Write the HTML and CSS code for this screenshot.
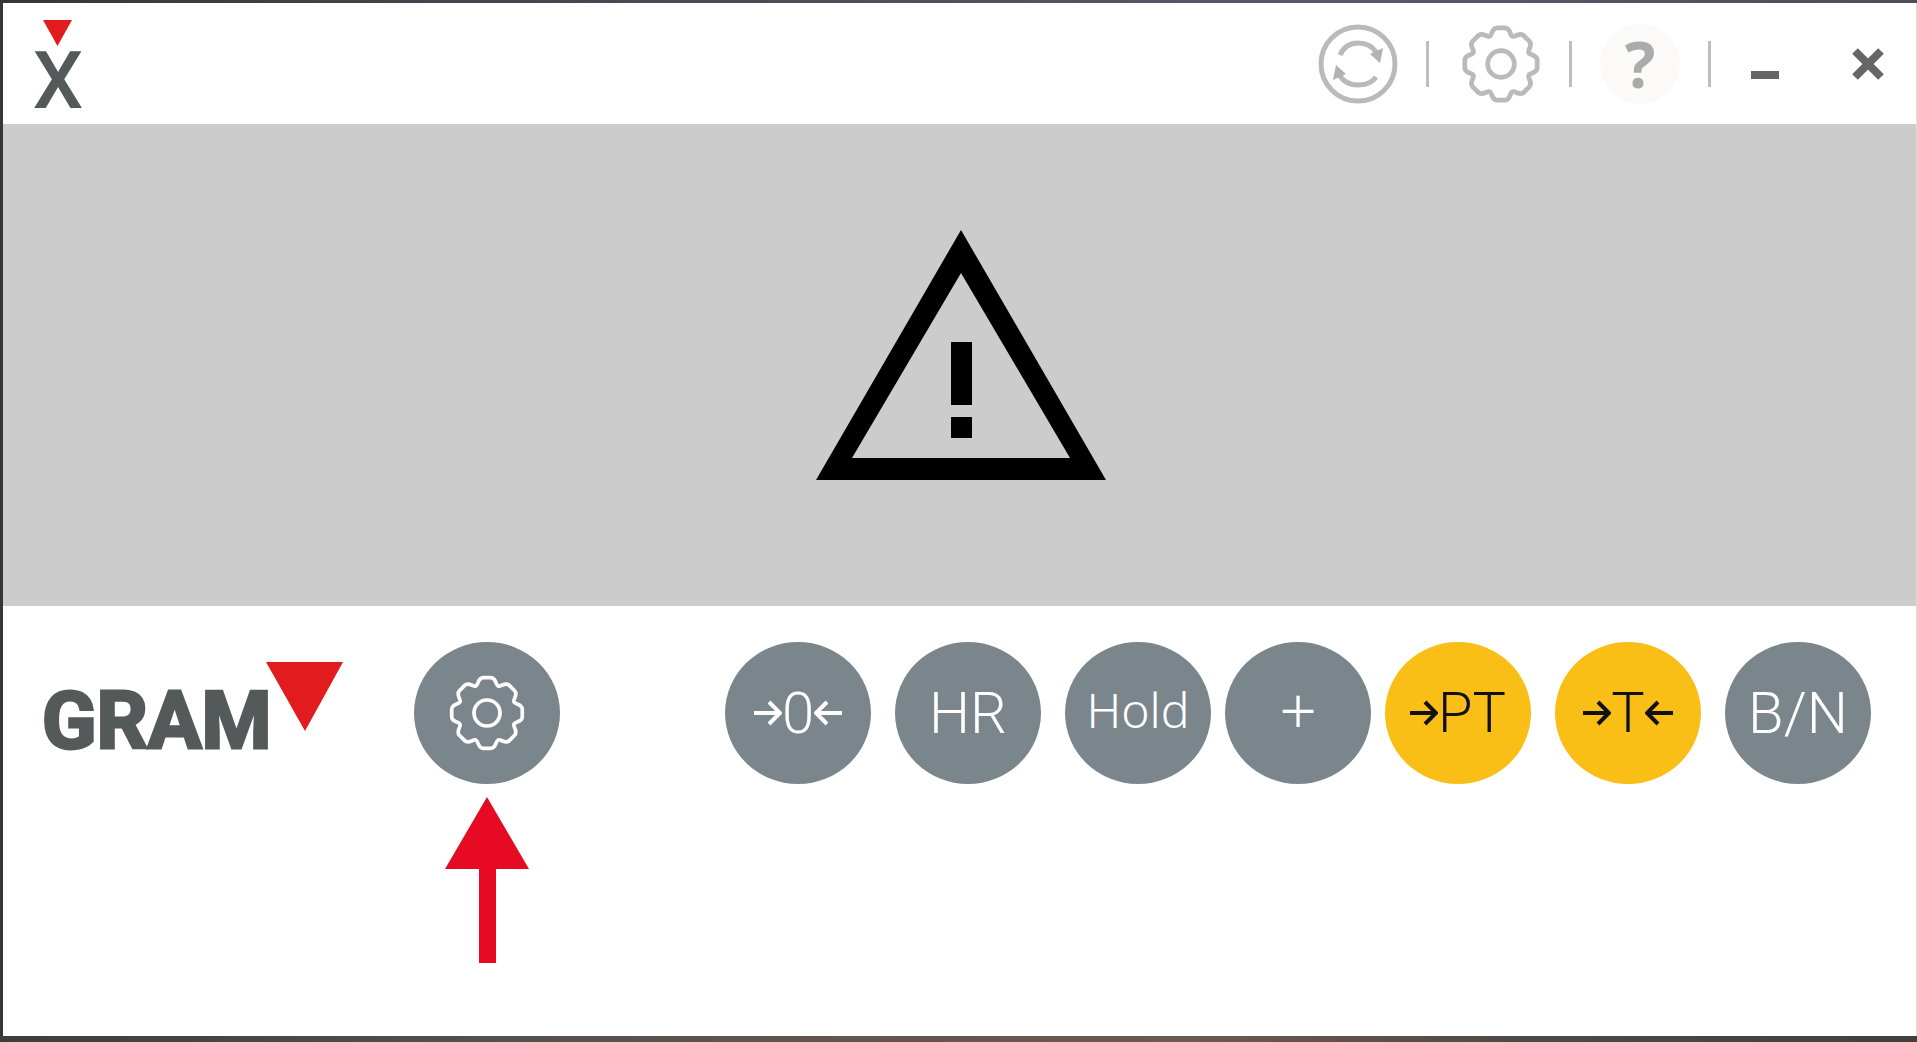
FILE: index.html
```html
<!doctype html>
<html lang="en">
  <head>
    <meta charset="UTF-8" />
    <meta name="viewport" content="width=device-width, initial-scale=1.0" />
    <title>Gram X</title>
    <link rel="stylesheet" href="styles.css">
  </head>

  <body>
    <!-- shared shapes -->
    <svg class="shapes" aria-hidden="true">
      <symbol id="gear" viewBox="-42 -42 84 84">
        <path d="M-12-29C-9.2-30.1-10-38-4-38L4-38C10-38 9.2-30.1 12-29C14.8-27.8 19.8-33.9 24-29.7L29.7-24C33.9-19.8 27.8-14.8 29-12C30.1-9.2 38-10 38-4L38 4C38 10 30.1 9.2 29 12C27.8 14.8 33.9 19.8 29.7 24L24 29.7C19.8 33.9 14.8 27.8 12 29C9.2 30.1 10 38 4 38L-4 38C-10 38-9.2 30.1-12 29C-14.8 27.8-19.8 33.9-24 29.7L-29.7 24C-33.9 19.8-27.8 14.8-29 12C-30.1 9.2-38 10-38 4L-38-4C-38-10-30.1-9.2-29-12C-27.8-14.8-33.9-19.8-29.7-24L-24-29.7C-19.8-33.9-14.8-27.8-12-29Z" />
        <circle r="14" />
      </symbol>
      <symbol id="arrow" viewBox="0 0 28 28">
        <path d="M0 14H26M15 3L26 14L15 25" />
      </symbol>
    </svg>

    <div class="window">
      <header class="titlebar">
        <svg class="app-icon" viewBox="0 0 64 120" role="img" aria-label="X">
          <path class="brand-red" d="M17 16H46L31.500 42Z" />
          <text class="brand-text" x="32" y="104" text-anchor="middle">X</text>
        </svg>

        <nav class="actions">
          <button class="action" aria-label="Refresh">
            <svg viewBox="-40 -40 80 80">
              <circle r="37" />
              <path d="M-18-9C-14-18-7-21 0-21C8-21 14-18 18-12M18 13C14 19 7 21 0 21C-8 21-14 18-18 12" />
              <path class="solid" d="M25-16L22-1L12-10ZM-25 16L-22 1L-12 10Z" />
            </svg>
          </button>
          <span class="divider"></span>
          <button class="action action-gear" aria-label="Settings">
            <svg><use href="#gear" /></svg>
          </button>
          <span class="divider"></span>
          <button class="action action-help">?</button>
          <span class="divider"></span>
        </nav>

        <button class="control control-min" aria-label="Minimize">
          <svg viewBox="0 0 32 32"><path d="M2 27H30" /></svg>
        </button>
        <button class="control" aria-label="Close">
          <svg viewBox="0 0 32 32"><path d="M3 3L29 29M29 3L3 29" /></svg>
        </button>
      </header>

      <main class="display">
        <svg class="warning" viewBox="0 0 292 250" role="img" aria-label="Warning">
          <path fill-rule="evenodd" d="M147 0L292 250H2ZM147 43L38 228H256Z" />
          <path d="M137 112H158V175H137ZM137 187H158V208H137Z" />
        </svg>
      </main>

      <footer class="toolbar">
        <svg class="logo" viewBox="0 0 300 110" role="img" aria-label="GRAM">
          <text class="brand-text" x="-1" y="86">GRAM</text>
          <path class="brand-red" d="M223 0H300L262 69Z" />
        </svg>

        <div class="settings">
          <button class="key" aria-label="Settings">
            <svg class="key-gear"><use href="#gear" /></svg>
          </button>
          <svg class="pointer" viewBox="0 0 84 166" aria-hidden="true">
            <path d="M42 0L84 72H51V166H34V72H0Z" />
          </svg>
        </div>

        <div class="keys">
          <div class="group">
            <button class="key">
              <svg class="arrow"><use href="#arrow" /></svg>
              <span>0</span>
              <svg class="arrow arrow-left"><use href="#arrow" /></svg>
            </button>
            <button class="key">HR</button>
            <button class="key key-word">Hold</button>
          </div>
          <button class="key key-plus">+</button>
          <div class="group">
            <button class="key key-tare">
              <svg class="arrow"><use href="#arrow" /></svg>
              <span>PT</span>
            </button>
            <button class="key key-tare">
              <svg class="arrow"><use href="#arrow" /></svg>
              <span>T</span>
              <svg class="arrow arrow-left"><use href="#arrow" /></svg>
            </button>
            <button class="key">B/N</button>
          </div>
        </div>
      </footer>
    </div>
  </body>
</html>
```
FILE: styles.css
```css
* {
  box-sizing: border-box;
}

html,
body {
  height: 100%;
  margin: 0;
}

body {
  padding: 3px 1px 6px 3px;
  background: linear-gradient(90deg, #35363c 0, #35363c 3px, #45424c 20%, #5d5868 70%, #514c59) top / 100% 3px no-repeat,
    linear-gradient(90deg, #403b3c, #55504e 25%, #6b5a50 62%, #4e4946 80%, #443e3d) bottom / 100% 6px no-repeat,
    linear-gradient(90deg, #35353a 3px, #ddd 3px);
  font-family: Roboto, "Liberation Sans", sans-serif;
}

button {
  display: flex;
  align-items: center;
  justify-content: center;
  padding: 0;
  border: none;
  background: none;
  font: inherit;
  cursor: pointer;
}

svg {
  display: block;
  flex: none;
}

.shapes {
  position: absolute;
  width: 0;
  height: 0;
}

.window {
  display: flex;
  flex-direction: column;
  height: 100%;
  background-color: #fff;
}

/* title bar */

.titlebar {
  flex: none;
  display: flex;
  align-items: center;
  height: 121px;
  padding: 0 32px 0 23px;
}

.app-icon {
  width: 64px;
  height: 120px;
  overflow: visible;
}

.brand-red {
  fill: #e11b1e;
}

.brand-text {
  fill: #545a5a;
  stroke: #545a5a;
  stroke-width: 3px;
  font-size: 80px;
  font-weight: 700;
}

.app-icon .brand-text {
  stroke: none;
  font-weight: 500;
}

.actions {
  display: flex;
  align-items: center;
  gap: 28px;
  margin-left: auto;
}

.action {
  width: 80px;
  height: 80px;
  border-radius: 50%;
}

.action svg {
  width: 80px;
  height: 80px;
  fill: none;
  stroke: #b8bbbb;
  stroke-width: 5px;
}

.action .solid {
  fill: #b0b3b3;
  stroke: none;
}

.action-gear {
  width: 84px;
  padding-left: 4px;
}

.action-help {
  background-color: #fbfaf9;
  color: #aaacab;
  font-family: "Noto Sans", sans-serif;
  font-size: 64px;
  font-weight: 700;
  line-height: 80px;
}

.divider {
  width: 3px;
  height: 46px;
  background-color: #bdbdbd;
}

.control svg {
  width: 32px;
  height: 32px;
  fill: none;
  stroke: #666;
  stroke-width: 8px;
}

.control-min {
  margin: 0 71px 0 38px;
}

/* weight display */

.display {
  flex: none;
  display: flex;
  justify-content: center;
  padding: 106px 0 126px;
  background-color: #ccc;
}

.warning {
  width: 292px;
  height: 250px;
}

/* keys */

.toolbar {
  flex: 1;
  display: flex;
  align-items: flex-start;
  padding: 36px 45px 0 40px;
}

.logo {
  width: 300px;
  height: 110px;
  margin: 20px 71px 0 0;
}

.settings {
  display: flex;
  flex-direction: column;
  align-items: center;
  gap: 13px;
}

.pointer {
  width: 84px;
  height: 166px;
  fill: #e60b22;
}

.keys {
  display: flex;
  gap: 14px;
  margin-left: auto;
}

.group {
  display: flex;
  gap: 24px;
}

.key {
  width: 146px;
  height: 142px;
  border-radius: 50%;
  background-color: #7b868c;
  color: #fff;
  font-size: 58px;
  font-weight: 300;
}

.key-word,
.key-plus {
  padding-bottom: 8px;
  font-family: "Noto Sans", sans-serif;
  font-size: 48px;
}

.key-plus {
  font-size: 66px;
}

.key-tare {
  background-color: #f9bf17;
  color: #111;
  font-size: 56px;
}

.key-gear {
  width: 78px;
  height: 78px;
  fill: none;
  stroke: #fff;
  stroke-width: 4px;
}

.arrow {
  width: 28px;
  height: 28px;
  fill: none;
  stroke: currentColor;
  stroke-width: 4px;
}

.arrow-left {
  transform: scaleX(-1);
}
```
